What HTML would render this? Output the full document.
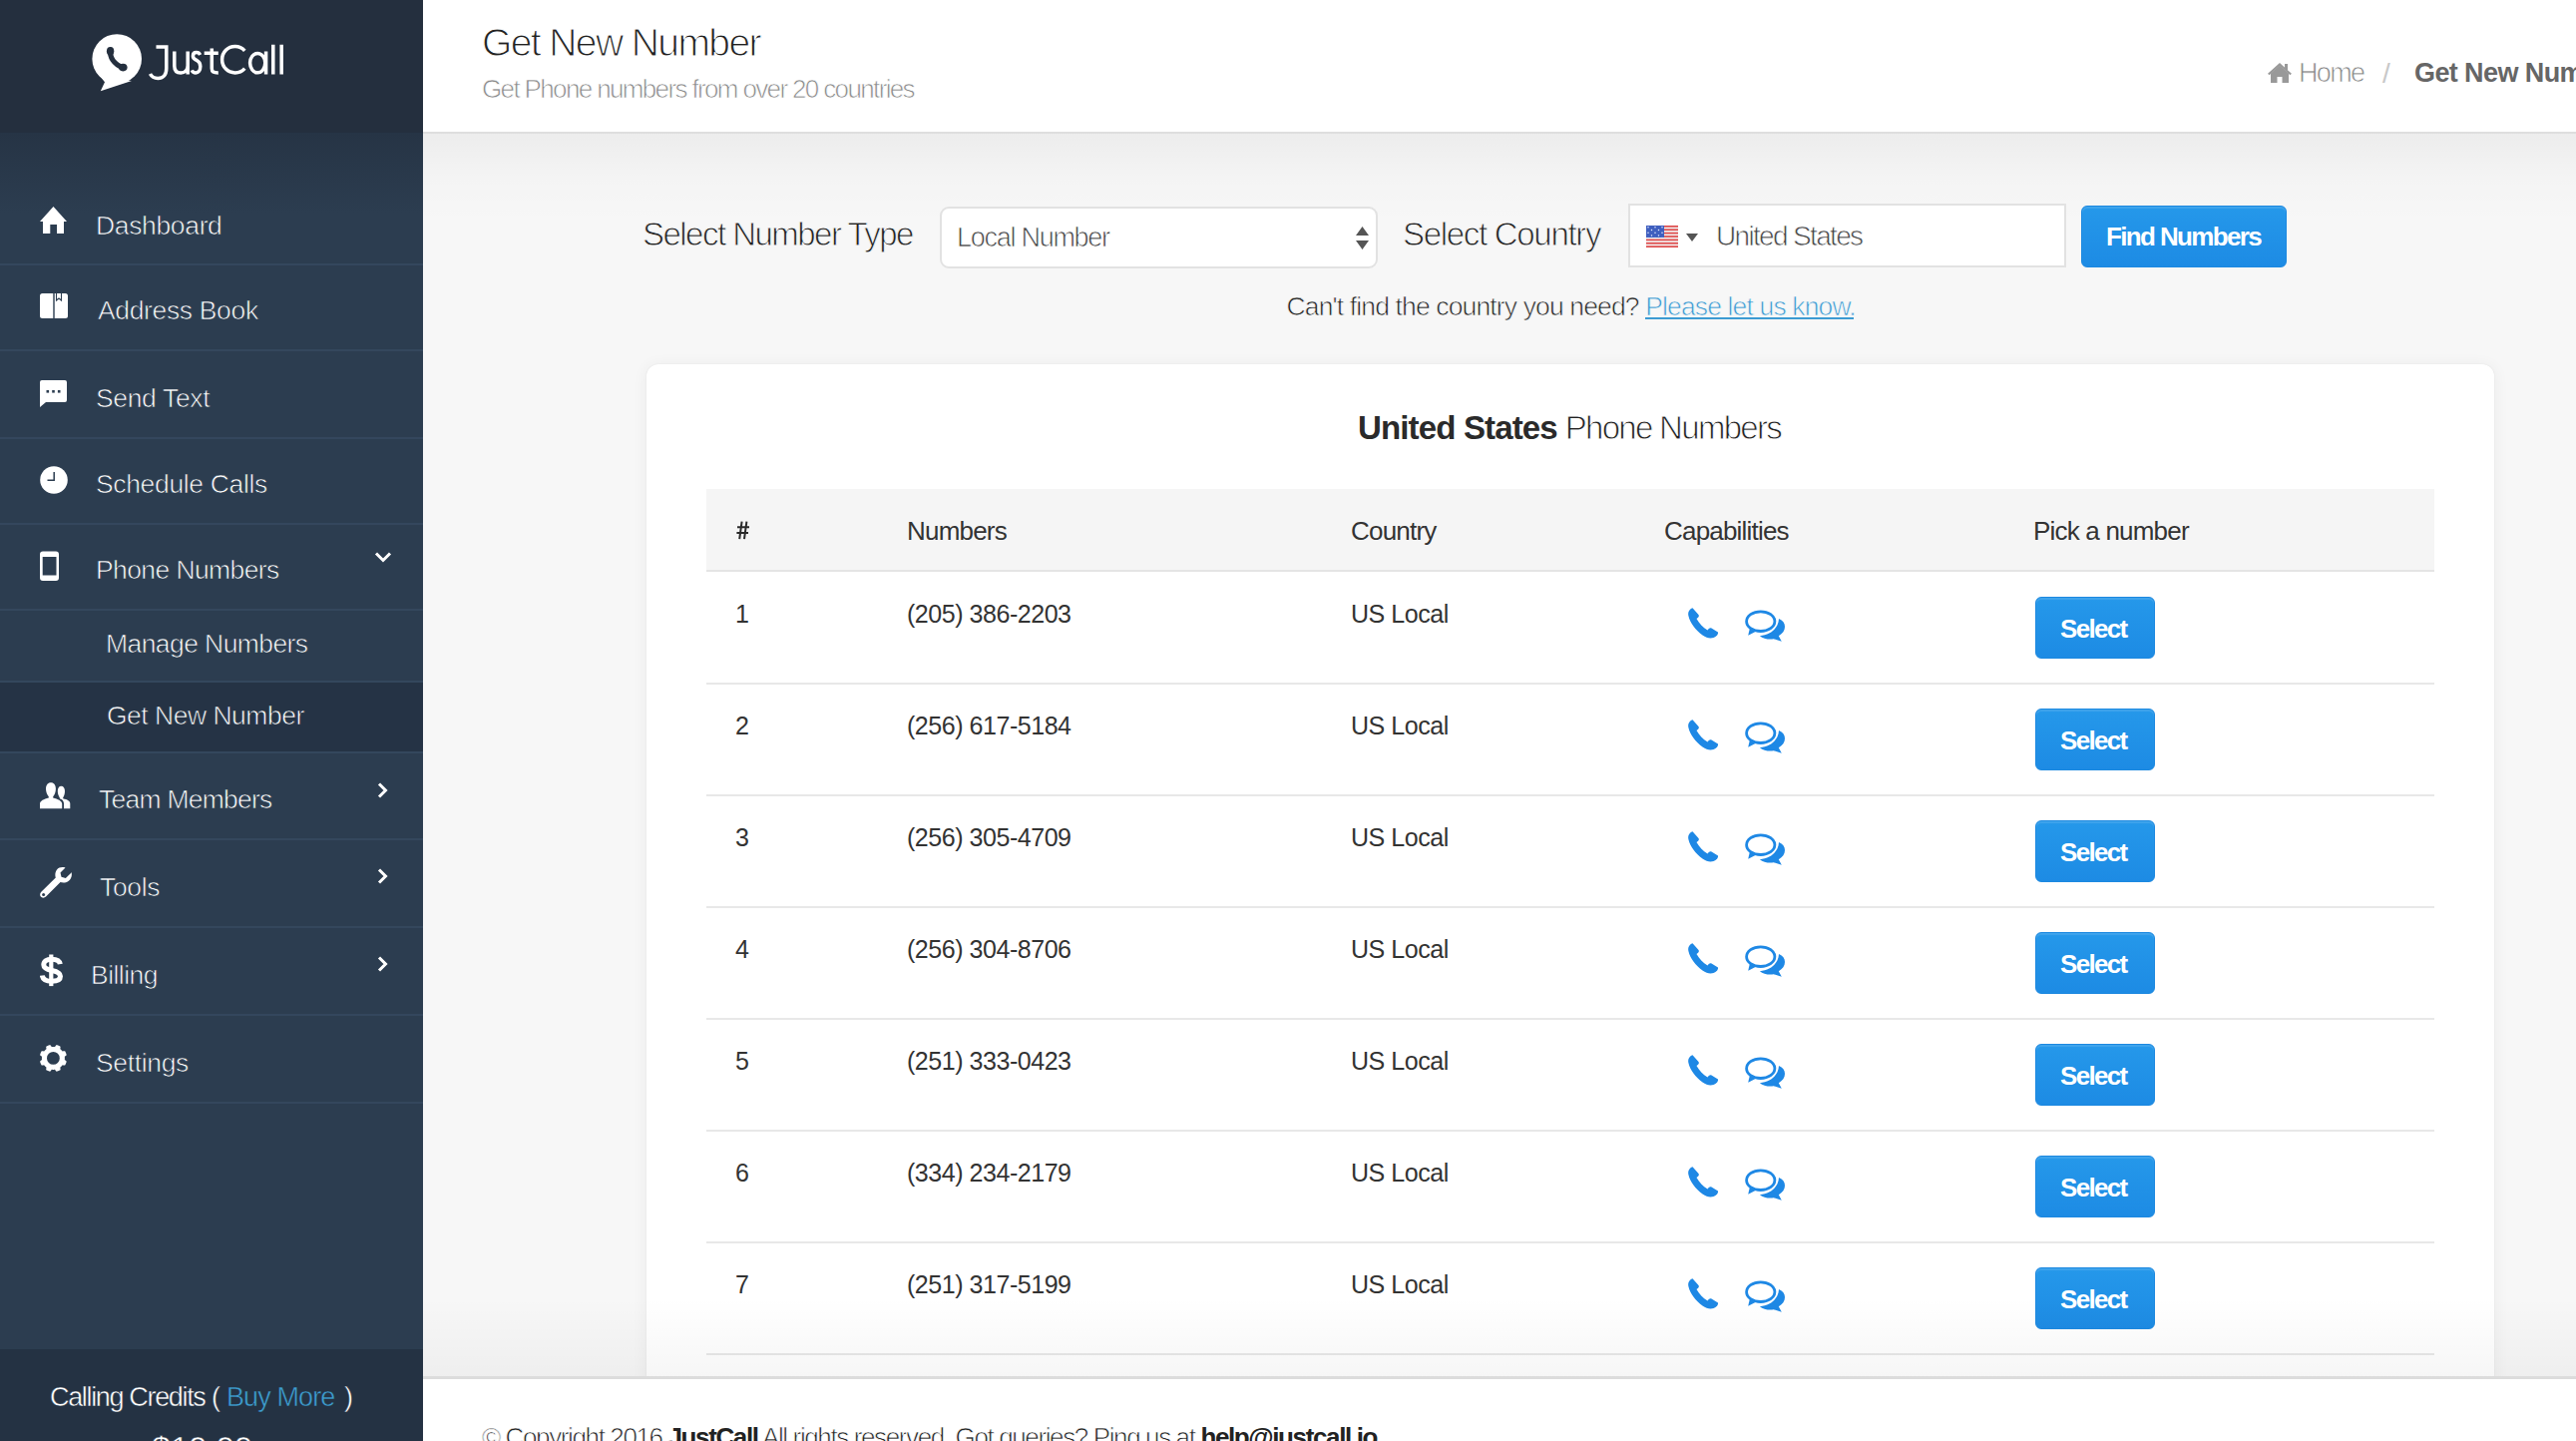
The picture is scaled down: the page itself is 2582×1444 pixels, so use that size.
<!DOCTYPE html>
<html><head><meta charset="utf-8">
<style>
*{box-sizing:border-box}
html,body{margin:0;padding:0}
body{width:2582px;height:1444px;overflow:hidden;position:relative;background:#f7f7f7;font-family:"Liberation Sans",sans-serif;color:#333}
.t{position:absolute;line-height:1;white-space:nowrap;font-family:"Liberation Sans",sans-serif}
.abs{position:absolute}
#sb{position:absolute;left:0;top:0;width:424px;height:1444px;background:#2c3d50;overflow:hidden}
#sbhead{position:absolute;left:0;top:0;width:424px;height:133px;background:#242f3e}
#sbgrad{position:absolute;left:0;top:133px;width:424px;height:80px;background:linear-gradient(#263445,#2c3d50)}
.div{position:absolute;left:0;width:424px;height:2px;background:#34475d}
.mi{color:#fff;font-size:26.5px;letter-spacing:-0.35px;-webkit-text-stroke:0.7px #2c3d50}
.ic{position:absolute}
#main-head{position:absolute;left:424px;top:0;width:2158px;height:134px;background:#fff;border-bottom:2px solid #dedede}
#shade{position:absolute;left:424px;top:134px;width:2158px;height:90px;background:linear-gradient(rgba(0,0,0,0.042),rgba(0,0,0,0.012) 50%,rgba(0,0,0,0))}
#card{position:absolute;left:648px;top:365px;width:1852px;height:1100px;background:#fff;border-radius:12px;box-shadow:0 0 1.5px rgba(0,0,0,0.09),0 2px 14px 3px rgba(0,0,0,0.04)}
#thead{position:absolute;left:708px;top:490px;width:1732px;height:83px;background:#f5f5f5;border-bottom:2px solid #e4e4e4}
.rowdiv{position:absolute;left:708px;width:1732px;height:2px;background:#e8e8e8}
.btn{position:absolute;background:linear-gradient(#2598ea,#1d8be4);border-radius:6px;border:1px solid #1c88e0;box-shadow:inset 0 2px 1px rgba(255,255,255,0.12)}
.hd{top:518.5px;font-size:26px;letter-spacing:-0.8px;color:#333}
.rt{font-size:25px;letter-spacing:-0.46px;color:#333}
.sel{position:absolute;left:2040px;width:120px;height:62px;background:linear-gradient(#2598ea,#1d8be4);border-radius:6px;border:1px solid #1c88e0;box-shadow:inset 0 2px 1px rgba(255,255,255,0.12)}
#footer{position:absolute;left:424px;top:1379px;width:2158px;height:65px;background:#fff;border-top:3px solid #dcdcdc}
#bshade{position:absolute;left:424px;top:1300px;width:2158px;height:79px;background:linear-gradient(rgba(0,0,0,0),rgba(0,0,0,0.035))}
#sbfoot{position:absolute;left:0;top:1352px;width:424px;height:92px;background:#243243}
</style></head>
<body>
<!-- SIDEBAR -->
<div id="sb">
  <div id="sbhead"></div>
  <div id="sbgrad"></div>

  <!-- logo -->
  <svg class="ic" style="left:88px;top:30px" width="60" height="66" viewBox="0 0 60 66">
    <circle cx="29.2" cy="29" r="24.8" fill="#fff"/>
    <path d="M12.8 61.2 L17 52.2 L12 46 L30 50 L44 51 Z" fill="#fff"/>
    <g fill="#242f3e">
      <path d="M22.8 20 C21.8 27 25.5 34 35.5 38" fill="none" stroke="#242f3e" stroke-width="5.2" stroke-linecap="round"/>
      <ellipse cx="22.6" cy="21.3" rx="3.7" ry="4.4"/>
      <ellipse cx="35.3" cy="37.6" rx="4.3" ry="3.8"/>
    </g>
  </svg>
  <svg class="ic" style="left:140px;top:40px" width="150" height="45" viewBox="140 40 150 45">
    <g fill="none" stroke="#fff" stroke-width="3.5">
      <path d="M156.5 47 H166.8 V68.5 C166.8 75.5 163 78.5 158.3 78.5 C154.5 78.5 151.8 76.5 150.5 74"/>
      <path d="M174.8 51.6 V66 C174.8 70.8 177.3 73 181.2 73 C185.1 73 188.2 70.5 188.2 65.5 M188.2 51.6 V74.6"/>
      <path d="M200.6 55 C199.8 53.3 198.5 52.6 196.9 52.6 C194.6 52.6 193.4 54.2 193.4 56.2 C193.4 58.7 195.5 59.6 197.3 60.5 C199.5 61.7 200.8 63.2 200.8 66.6 C200.8 70.4 198.8 73 196.2 73 C194.2 73 193 72 192.3 70.3"/>
      <path d="M212.3 48.5 V68.5 C212.3 72.2 213.8 72.9 218.8 72.9 M204.7 53.3 H218.8"/>
      <path d="M245.3 50.8 C242.8 48 239.3 46.5 235.7 46.5 C228.3 46.5 222.6 52.3 222.6 59.7 C222.6 67.1 228.3 72.9 235.7 72.9 C239.3 72.9 242.8 71.4 245.3 68.6"/>
      <ellipse cx="258.2" cy="63.1" rx="7.6" ry="9.7"/>
      <path d="M266.6 51.6 V74.6 M273.8 44.8 V74.6 M282.2 44.8 V74.6"/>
    </g>
  </svg>

  <div class="div" style="top:264px"></div>
  <div class="div" style="top:350px"></div>
  <div class="div" style="top:438px"></div>
  <div class="div" style="top:524px"></div>
  <div class="div" style="top:610px"></div>
  <div class="div" style="top:682px"></div>
  <div class="abs" style="left:0;top:684px;width:424px;height:69px;background:#253345"></div>
  <div class="div" style="top:753px"></div>
  <div class="div" style="top:840px"></div>
  <div class="div" style="top:928px"></div>
  <div class="div" style="top:1016px"></div>
  <div class="div" style="top:1104px"></div>

  <!-- icons -->
  <svg class="ic" style="left:40px;top:207px" width="27" height="27" viewBox="0 0 27 27">
    <path d="M13.5 0 L0 15 L3 15 L3 27 L10.3 27 L10.3 18 L17 18 L17 27 L24 27 L24 15 L27 15 Z" fill="#fff"/>
  </svg>
  <svg class="ic" style="left:40px;top:294px" width="28" height="27" viewBox="0 0 28 27">
    <rect x="0" y="0" width="28" height="25" rx="2.5" fill="#fff"/>
    <rect x="13.3" y="0" width="1.4" height="26.5" fill="#2c3d50"/>
    <path d="M16.5 0 L16.5 7 L19 5 L21.5 7 L21.5 0" fill="none" stroke="#2c3d50" stroke-width="1.1"/>
  </svg>
  <svg class="ic" style="left:40px;top:381px" width="27" height="28" viewBox="0 0 27 28">
    <path d="M2 0 H25 Q27 0 27 2 V20 Q27 22 25 22 H6 L0 27 V2 Q0 0 2 0 Z" fill="#fff"/>
    <rect x="6.5" y="10" width="2.6" height="2.6" fill="#2c3d50"/>
    <rect x="12.2" y="10" width="2.6" height="2.6" fill="#2c3d50"/>
    <rect x="17.9" y="10" width="2.6" height="2.6" fill="#2c3d50"/>
  </svg>
  <svg class="ic" style="left:40px;top:467px" width="28" height="28" viewBox="0 0 28 28">
    <circle cx="14" cy="14" r="13.8" fill="#fff"/>
    <path d="M14.2 6 V14.2 H7.5" fill="none" stroke="#2c3d50" stroke-width="1.5"/>
  </svg>
  <svg class="ic" style="left:40px;top:552px" width="20" height="31" viewBox="0 0 20 31">
    <path d="M3 0.5 H16 Q19 0.5 19 3.5 V27 Q19 30 16 30 H3 Q0 30 0 27 V3.5 Q0 0.5 3 0.5 Z M2.7 6 V24.5 H16.5 V6 Z" fill="#fff" fill-rule="evenodd"/>
  </svg>
  <svg class="ic" style="left:40px;top:783px" width="31" height="28" viewBox="0 0 31 28">
    <path d="M21.4 4.7 C19.2 4.7 17.8 6.8 17.8 9.8 C17.8 12.5 18.8 14.8 19.8 16.2 L19.8 17.3 C22.5 18.2 23.8 19.8 24 22 V27.3 H30.3 V22.2 C30.3 19.8 27.5 18.3 23.2 17.3 L23.2 16.2 C24.2 14.8 25 12.5 25 9.8 C25 6.8 23.6 4.7 21.4 4.7 Z" fill="#fff"/>
    <path d="M11 1.2 C7.8 1.2 6 3.8 6 7.5 C6 10.8 7.3 13.5 8.8 15.2 L8.8 16.5 C4 17.8 0 19.5 0 22.5 V27.3 H22.2 V22.5 C22.2 19.5 18 17.8 13.2 16.5 L13.2 15.2 C14.7 13.5 15.9 10.8 15.9 7.5 C15.9 3.8 14.2 1.2 11 1.2 Z" fill="#fff" stroke="#2c3d50" stroke-width="2.2" paint-order="stroke"/>
  </svg>
  <svg class="ic" style="left:40px;top:869px" width="33" height="32" viewBox="0 0 33 32">
    <path d="M31.5 5 C32.5 8.5 31.5 12 28.5 14 C26 15.7 23 15.8 20.5 15 L6 29.5 C4.5 31 2 31 0.8 29.5 C-0.3 28 0 26 1.3 24.8 L15.8 10.5 C15 8 15.2 5 17 2.5 C19 0 22.5 -0.5 25.5 0.5 L20.5 5.5 L21.5 9.8 L25.8 11 L31 6 Z" fill="#fff"/>
    <circle cx="3.6" cy="27.4" r="1.5" fill="#2c3d50"/>
  </svg>
  <svg class="ic" style="left:40px;top:956px" width="24" height="33" viewBox="0 0 24 33"><rect x="9.2" y="0.5" width="4.2" height="31.6" fill="#fff"/><path d="M20.3 10.2 C19.8 7 16.5 5.2 11.8 5.2 C6.5 5.2 3.8 7.5 3.8 10.8 C3.8 14.5 7.5 15.6 12 16.5 C16.8 17.5 20.5 18.8 20.5 22.3 C20.5 25.8 17 27.3 11.8 27.3 C6 27.3 2.8 25 2.3 21.5" fill="none" stroke="#fff" stroke-width="5"/></svg>
  <svg class="ic" style="left:39px;top:1046px" width="30" height="30" viewBox="-14.4 -14.4 30 30"><path d="M11.50 0.00 L11.50 0.20 L11.49 0.40 L11.48 0.60 L11.47 0.80 L11.46 1.00 L11.44 1.20 L11.41 1.40 L11.47 1.61 L11.71 1.85 L12.08 2.13 L12.50 2.43 L12.91 2.74 L13.19 3.05 L13.29 3.31 L13.23 3.55 L13.17 3.78 L13.10 4.01 L13.03 4.23 L12.95 4.46 L12.87 4.69 L12.79 4.91 L12.70 5.13 L12.61 5.35 L12.52 5.57 L12.42 5.79 L12.31 6.01 L12.21 6.22 L12.10 6.43 L11.98 6.64 L11.86 6.85 L11.74 7.05 L11.48 7.17 L11.07 7.19 L10.56 7.12 L10.04 7.03 L9.59 6.97 L9.25 6.97 L9.06 7.08 L8.94 7.24 L8.81 7.39 L8.68 7.54 L8.55 7.70 L8.41 7.84 L8.27 7.99 L8.13 8.13 L7.99 8.27 L7.84 8.41 L7.70 8.55 L7.54 8.68 L7.39 8.81 L7.24 8.94 L7.08 9.06 L6.97 9.25 L6.97 9.59 L7.03 10.04 L7.12 10.56 L7.19 11.07 L7.17 11.48 L7.05 11.74 L6.85 11.86 L6.64 11.98 L6.43 12.10 L6.22 12.21 L6.01 12.31 L5.79 12.42 L5.57 12.52 L5.35 12.61 L5.13 12.70 L4.91 12.79 L4.69 12.87 L4.46 12.95 L4.23 13.03 L4.01 13.10 L3.78 13.17 L3.55 13.23 L3.31 13.29 L3.05 13.19 L2.74 12.91 L2.43 12.50 L2.13 12.08 L1.85 11.71 L1.61 11.47 L1.40 11.41 L1.20 11.44 L1.00 11.46 L0.80 11.47 L0.60 11.48 L0.40 11.49 L0.20 11.50 L0.00 11.50 L-0.20 11.50 L-0.40 11.49 L-0.60 11.48 L-0.80 11.47 L-1.00 11.46 L-1.20 11.44 L-1.40 11.41 L-1.61 11.47 L-1.85 11.71 L-2.13 12.08 L-2.43 12.50 L-2.74 12.91 L-3.05 13.19 L-3.31 13.29 L-3.55 13.23 L-3.78 13.17 L-4.01 13.10 L-4.23 13.03 L-4.46 12.95 L-4.69 12.87 L-4.91 12.79 L-5.13 12.70 L-5.35 12.61 L-5.57 12.52 L-5.79 12.42 L-6.01 12.31 L-6.22 12.21 L-6.43 12.10 L-6.64 11.98 L-6.85 11.86 L-7.05 11.74 L-7.17 11.48 L-7.19 11.07 L-7.12 10.56 L-7.03 10.04 L-6.97 9.59 L-6.97 9.25 L-7.08 9.06 L-7.24 8.94 L-7.39 8.81 L-7.54 8.68 L-7.70 8.55 L-7.84 8.41 L-7.99 8.27 L-8.13 8.13 L-8.27 7.99 L-8.41 7.84 L-8.55 7.70 L-8.68 7.54 L-8.81 7.39 L-8.94 7.24 L-9.06 7.08 L-9.25 6.97 L-9.59 6.97 L-10.04 7.03 L-10.56 7.12 L-11.07 7.19 L-11.48 7.17 L-11.74 7.05 L-11.86 6.85 L-11.98 6.64 L-12.10 6.43 L-12.21 6.22 L-12.31 6.01 L-12.42 5.79 L-12.52 5.57 L-12.61 5.35 L-12.70 5.13 L-12.79 4.91 L-12.87 4.69 L-12.95 4.46 L-13.03 4.23 L-13.10 4.01 L-13.17 3.78 L-13.23 3.55 L-13.29 3.31 L-13.19 3.05 L-12.91 2.74 L-12.50 2.43 L-12.08 2.13 L-11.71 1.85 L-11.47 1.61 L-11.41 1.40 L-11.44 1.20 L-11.46 1.00 L-11.47 0.80 L-11.48 0.60 L-11.49 0.40 L-11.50 0.20 L-11.50 0.00 L-11.50 -0.20 L-11.49 -0.40 L-11.48 -0.60 L-11.47 -0.80 L-11.46 -1.00 L-11.44 -1.20 L-11.41 -1.40 L-11.47 -1.61 L-11.71 -1.85 L-12.08 -2.13 L-12.50 -2.43 L-12.91 -2.74 L-13.19 -3.05 L-13.29 -3.31 L-13.23 -3.55 L-13.17 -3.78 L-13.10 -4.01 L-13.03 -4.23 L-12.95 -4.46 L-12.87 -4.69 L-12.79 -4.91 L-12.70 -5.13 L-12.61 -5.35 L-12.52 -5.57 L-12.42 -5.79 L-12.31 -6.01 L-12.21 -6.22 L-12.10 -6.43 L-11.98 -6.64 L-11.86 -6.85 L-11.74 -7.05 L-11.48 -7.17 L-11.07 -7.19 L-10.56 -7.12 L-10.04 -7.03 L-9.59 -6.97 L-9.25 -6.97 L-9.06 -7.08 L-8.94 -7.24 L-8.81 -7.39 L-8.68 -7.54 L-8.55 -7.70 L-8.41 -7.84 L-8.27 -7.99 L-8.13 -8.13 L-7.99 -8.27 L-7.84 -8.41 L-7.70 -8.55 L-7.54 -8.68 L-7.39 -8.81 L-7.24 -8.94 L-7.08 -9.06 L-6.97 -9.25 L-6.97 -9.59 L-7.03 -10.04 L-7.12 -10.56 L-7.19 -11.07 L-7.17 -11.48 L-7.05 -11.74 L-6.85 -11.86 L-6.64 -11.98 L-6.43 -12.10 L-6.22 -12.21 L-6.01 -12.31 L-5.79 -12.42 L-5.57 -12.52 L-5.35 -12.61 L-5.13 -12.70 L-4.91 -12.79 L-4.69 -12.87 L-4.46 -12.95 L-4.23 -13.03 L-4.01 -13.10 L-3.78 -13.17 L-3.55 -13.23 L-3.31 -13.29 L-3.05 -13.19 L-2.74 -12.91 L-2.43 -12.50 L-2.13 -12.08 L-1.85 -11.71 L-1.61 -11.47 L-1.40 -11.41 L-1.20 -11.44 L-1.00 -11.46 L-0.80 -11.47 L-0.60 -11.48 L-0.40 -11.49 L-0.20 -11.50 L-0.00 -11.50 L0.20 -11.50 L0.40 -11.49 L0.60 -11.48 L0.80 -11.47 L1.00 -11.46 L1.20 -11.44 L1.40 -11.41 L1.61 -11.47 L1.85 -11.71 L2.13 -12.08 L2.43 -12.50 L2.74 -12.91 L3.05 -13.19 L3.31 -13.29 L3.55 -13.23 L3.78 -13.17 L4.01 -13.10 L4.23 -13.03 L4.46 -12.95 L4.69 -12.87 L4.91 -12.79 L5.13 -12.70 L5.35 -12.61 L5.57 -12.52 L5.79 -12.42 L6.01 -12.31 L6.22 -12.21 L6.43 -12.10 L6.64 -11.98 L6.85 -11.86 L7.05 -11.74 L7.17 -11.48 L7.19 -11.07 L7.12 -10.56 L7.03 -10.04 L6.97 -9.59 L6.97 -9.25 L7.08 -9.06 L7.24 -8.94 L7.39 -8.81 L7.54 -8.68 L7.70 -8.55 L7.84 -8.41 L7.99 -8.27 L8.13 -8.13 L8.27 -7.99 L8.41 -7.84 L8.55 -7.70 L8.68 -7.54 L8.81 -7.39 L8.94 -7.24 L9.06 -7.08 L9.25 -6.97 L9.59 -6.97 L10.04 -7.03 L10.56 -7.12 L11.07 -7.19 L11.48 -7.17 L11.74 -7.05 L11.86 -6.85 L11.98 -6.64 L12.10 -6.43 L12.21 -6.22 L12.31 -6.01 L12.42 -5.79 L12.52 -5.57 L12.61 -5.35 L12.70 -5.13 L12.79 -4.91 L12.87 -4.69 L12.95 -4.46 L13.03 -4.23 L13.10 -4.01 L13.17 -3.78 L13.23 -3.55 L13.29 -3.31 L13.19 -3.05 L12.91 -2.74 L12.50 -2.43 L12.08 -2.13 L11.71 -1.85 L11.47 -1.61 L11.41 -1.40 L11.44 -1.20 L11.46 -1.00 L11.47 -0.80 L11.48 -0.60 L11.49 -0.40 L11.50 -0.20 Z M6.4 0 A6.4 6.4 0 1 0 -6.4 0 A6.4 6.4 0 1 0 6.4 0 Z" fill="#fff" fill-rule="evenodd"/></svg>
  <!-- chevrons -->
  <svg class="ic" style="left:375px;top:552px" width="18" height="13" viewBox="0 0 18 13"><path d="M2 2.5 L9 9.5 L16 2.5" fill="none" stroke="#fff" stroke-width="3"/></svg>
  <svg class="ic" style="left:377px;top:784px" width="13" height="16" viewBox="0 0 13 16"><path d="M3 1.5 L9.5 8 L3 14.5" fill="none" stroke="#fff" stroke-width="3"/></svg>
  <svg class="ic" style="left:377px;top:870px" width="13" height="16" viewBox="0 0 13 16"><path d="M3 1.5 L9.5 8 L3 14.5" fill="none" stroke="#fff" stroke-width="3"/></svg>
  <svg class="ic" style="left:377px;top:958px" width="13" height="16" viewBox="0 0 13 16"><path d="M3 1.5 L9.5 8 L3 14.5" fill="none" stroke="#fff" stroke-width="3"/></svg>

  <!-- menu text -->
  <div class="t mi" style="left:96px;top:212.6px">Dashboard</div>
  <div class="t mi" style="left:98px;top:298.1px">Address Book</div>
  <div class="t mi" style="left:96px;top:385.9px">Send Text</div>
  <div class="t mi" style="left:96px;top:471.6px">Schedule Calls</div>
  <div class="t mi" style="left:96px;top:558.1px;letter-spacing:-0.6px">Phone Numbers</div>
  <div class="t mi" style="left:106px;top:631.6px;letter-spacing:-0.58px">Manage Numbers</div>
  <div class="t mi" style="left:107px;top:703.6px;letter-spacing:-0.5px;-webkit-text-stroke-color:#253345">Get New Number</div>
  <div class="t mi" style="left:99px;top:788px;letter-spacing:-0.75px">Team Members</div>
  <div class="t mi" style="left:100px;top:875.6px">Tools</div>
  <div class="t mi" style="left:91px;top:964.3px;letter-spacing:-0.55px">Billing</div>
  <div class="t mi" style="left:96px;top:1052.1px">Settings</div>

  <div id="sbfoot"></div>
  <div class="t" style="left:50px;top:1386.7px;font-size:27px;letter-spacing:-1.34px;color:#fff;-webkit-text-stroke:0.45px #243243">Calling Credits</div>
  <div class="t" style="left:212px;top:1386.7px;font-size:27px;color:#fff;-webkit-text-stroke:0.45px #243243">(</div>
  <div class="t" style="left:227px;top:1386.7px;font-size:27px;letter-spacing:-0.9px;color:#3d9dd0;-webkit-text-stroke:0.45px #243243">Buy More</div>
  <div class="t" style="left:345px;top:1386.7px;font-size:27px;color:#fff;-webkit-text-stroke:0.45px #243243">)</div>
  <div class="t" style="left:152px;top:1434px;font-size:34px;letter-spacing:-0.5px;color:#fff;-webkit-text-stroke:0.5px #243243">$10.00</div>

</div>

<!-- HEADER -->
<div id="main-head"></div>
<div class="t" style="left:483px;top:23px;font-size:39px;letter-spacing:-1.6px;color:#222;-webkit-text-stroke:1.1px #fff">Get New Number</div>
<div class="t" style="left:483px;top:76px;font-size:26px;letter-spacing:-1.64px;color:#8a8a8a;-webkit-text-stroke:0.7px #fff">Get Phone numbers from over 20 countries</div>
<svg class="ic" style="left:2273px;top:63px" width="24" height="21" viewBox="0 0 24 21">
  <path d="M12 2.5 L3 10.5 V20 H9.5 V14 H14.5 V20 H21 V10.5 Z" fill="#999"/>
  <path d="M0.8 11.5 L12 1.5 L23.2 11.5" fill="none" stroke="#999" stroke-width="2.2"/>
  <rect x="17" y="1" width="3" height="6" fill="#999"/>
</svg>
<div class="t" style="left:2304px;top:59.6px;font-size:27px;letter-spacing:-1.67px;color:#888;-webkit-text-stroke:0.7px #fff">Home</div>
<div class="t" style="left:2388px;top:59.5px;font-size:28px;color:#c8c8c8">/</div>
<div class="t" style="left:2420px;top:59.6px;font-size:27px;font-weight:700;letter-spacing:-0.6px;color:#666">Get New Number</div>
<div id="shade"></div>

<!-- FORM -->
<div class="t" style="left:644px;top:218px;font-size:33px;letter-spacing:-1.53px;color:#222;-webkit-text-stroke:0.9px #f7f7f7">Select Number Type</div>
<div class="abs" style="left:942px;top:207px;width:439px;height:62px;background:#fff;border:2px solid #e2e2e2;border-radius:9px"></div>
<div class="t" style="left:959px;top:225px;font-size:27px;letter-spacing:-1.27px;color:#444;-webkit-text-stroke:0.7px #fff">Local Number</div>
<svg class="ic" style="left:1358px;top:226px" width="15" height="26" viewBox="0 0 15 26"><path d="M7.5 1 L14 10 H1 Z M1 15 H14 L7.5 24 Z" fill="#555"/></svg>
<div class="t" style="left:1406px;top:218px;font-size:33px;letter-spacing:-1.3px;color:#222;-webkit-text-stroke:0.9px #f7f7f7">Select Country</div>
<div class="abs" style="left:1632px;top:204px;width:439px;height:64px;background:#fff;border:2px solid #e2e2e2"></div>
<svg class="ic" style="left:1650px;top:226px" width="32" height="22" viewBox="0 0 32 22"><rect width="32" height="22" fill="#f2f0f0"/><g fill="#de4b4b"><rect y="0.00" width="32" height="1.69"/><rect y="3.38" width="32" height="1.69"/><rect y="6.77" width="32" height="1.69"/><rect y="10.15" width="32" height="1.69"/><rect y="13.54" width="32" height="1.69"/><rect y="16.92" width="32" height="1.69"/><rect y="20.31" width="32" height="1.69"/></g><rect width="18" height="12" fill="#3f5fbf"/><g fill="#e8ecff"><circle cx="2.0" cy="1.8" r="0.75"/><circle cx="9.0" cy="1.8" r="0.75"/><circle cx="16.0" cy="1.8" r="0.75"/><circle cx="5.5" cy="4.5" r="0.75"/><circle cx="12.5" cy="4.5" r="0.75"/><circle cx="2.0" cy="7.2" r="0.75"/><circle cx="9.0" cy="7.2" r="0.75"/><circle cx="16.0" cy="7.2" r="0.75"/><circle cx="5.5" cy="9.9" r="0.75"/><circle cx="12.5" cy="9.9" r="0.75"/><circle cx="2.0" cy="12.6" r="0.75"/><circle cx="9.0" cy="12.6" r="0.75"/><circle cx="16.0" cy="12.6" r="0.75"/></g></svg>
<svg class="ic" style="left:1689px;top:233px" width="14" height="10" viewBox="0 0 14 10"><path d="M1 1 H13 L7 9 Z" fill="#555"/></svg>
<div class="t" style="left:1720px;top:222.8px;font-size:28px;letter-spacing:-1.67px;color:#444;-webkit-text-stroke:0.7px #fff">United States</div>
<div class="btn" style="left:2086px;top:206px;width:206px;height:62px"></div>
<div class="t" style="left:2111px;top:224px;font-size:26px;font-weight:700;letter-spacing:-1.64px;color:#fff">Find Numbers</div>
<div class="t" style="left:1289.5px;top:293.6px;font-size:26.5px;letter-spacing:-0.86px;color:#222;-webkit-text-stroke:0.7px #f7f7f7">Can't find the country you need? <span style="color:#3c9bd3">Please let us know.</span></div>
<div class="abs" style="left:1649px;top:318px;width:209px;height:2px;background:#3c9bd3"></div>

<!-- CARD -->
<div id="card"></div>
<svg width="0" height="0" style="position:absolute">
<defs>
<g id="phn"><path d="M5.5 1.2 C2 2.5 0.5 5.5 1.5 9.5 C3 16 8.5 23.5 15.5 28.5 C19.5 31.5 23.5 32 26.5 31 C29.5 30 31.5 27.5 31 25.5 L24.5 21.5 C23 20.8 22 21.5 20.5 23.5 C16 21 12 16.5 9.5 12 C11.5 10.5 12.5 9.5 11.5 8 Z" fill="#1e88e5"/></g>
<g id="cht"><ellipse cx="16.75" cy="11.65" rx="14.15" ry="9.85" fill="none" stroke="#1e88e5" stroke-width="2.8"/>
<path d="M6 18 L4.2 25.7 L13 21.3 Z" fill="#1e88e5"/>
<path d="M35 9 C39 10.5 41 13.5 41 17 C41 20.8 38.8 24 34.8 26.2 L37.8 31.8 L29.8 29.3 C28.5 29.5 27.5 29.6 26.5 29.6 C22.5 29.6 18.5 28.3 15.9 26.2 C26.5 25.5 34.5 18.5 35 9 Z" fill="#1e88e5"/></g>
</defs></svg>
<div id="thead"></div>
<div class="t" style="left:1361px;top:411.7px;font-size:33px;letter-spacing:-1.29px;color:#222;-webkit-text-stroke:0.9px #fff"><b style="-webkit-text-stroke:0;letter-spacing:-0.85px;color:#2a2a2a">United States</b> <span style="letter-spacing:-1.7px">Phone Numbers</span></div>
<svg class="ic" style="left:738px;top:522px" width="14" height="19" viewBox="0 0 14 19"><g stroke="#2a2a2a" stroke-width="2" fill="none"><path d="M5.6 0.6 L3.2 18.2 M10.4 0.6 L8 18.2 M1 6.3 H13 M0.4 11.9 H12"/></g></svg>
<div class="t hd" style="left:909px">Numbers</div>
<div class="t hd" style="left:1354px">Country</div>
<div class="t hd" style="left:1668px">Capabilities</div>
<div class="t hd" style="left:2038px">Pick a number</div>
<div class="t rt" style="left:737px;top:602.8px">1</div>
<div class="t rt" style="left:909px;top:602.8px">(205) 386-2203</div>
<div class="t rt" style="left:1354px;top:602.8px">US Local</div>
<svg class="ic" style="left:1691px;top:608px" width="33" height="33" viewBox="0 0 33 33"><use href="#phn"/></svg>
<svg class="ic" style="left:1748px;top:611px" width="42" height="33" viewBox="0 0 42 33"><use href="#cht"/></svg>
<div class="sel" style="top:598px"></div>
<div class="t" style="left:2065px;top:616.7px;font-size:26px;font-weight:700;letter-spacing:-1.7px;color:#fff">Select</div>
<div class="rowdiv" style="top:684px"></div>
<div class="t rt" style="left:737px;top:714.8px">2</div>
<div class="t rt" style="left:909px;top:714.8px">(256) 617-5184</div>
<div class="t rt" style="left:1354px;top:714.8px">US Local</div>
<svg class="ic" style="left:1691px;top:720px" width="33" height="33" viewBox="0 0 33 33"><use href="#phn"/></svg>
<svg class="ic" style="left:1748px;top:723px" width="42" height="33" viewBox="0 0 42 33"><use href="#cht"/></svg>
<div class="sel" style="top:710px"></div>
<div class="t" style="left:2065px;top:728.7px;font-size:26px;font-weight:700;letter-spacing:-1.7px;color:#fff">Select</div>
<div class="rowdiv" style="top:796px"></div>
<div class="t rt" style="left:737px;top:826.8px">3</div>
<div class="t rt" style="left:909px;top:826.8px">(256) 305-4709</div>
<div class="t rt" style="left:1354px;top:826.8px">US Local</div>
<svg class="ic" style="left:1691px;top:832px" width="33" height="33" viewBox="0 0 33 33"><use href="#phn"/></svg>
<svg class="ic" style="left:1748px;top:835px" width="42" height="33" viewBox="0 0 42 33"><use href="#cht"/></svg>
<div class="sel" style="top:822px"></div>
<div class="t" style="left:2065px;top:840.7px;font-size:26px;font-weight:700;letter-spacing:-1.7px;color:#fff">Select</div>
<div class="rowdiv" style="top:908px"></div>
<div class="t rt" style="left:737px;top:938.8px">4</div>
<div class="t rt" style="left:909px;top:938.8px">(256) 304-8706</div>
<div class="t rt" style="left:1354px;top:938.8px">US Local</div>
<svg class="ic" style="left:1691px;top:944px" width="33" height="33" viewBox="0 0 33 33"><use href="#phn"/></svg>
<svg class="ic" style="left:1748px;top:947px" width="42" height="33" viewBox="0 0 42 33"><use href="#cht"/></svg>
<div class="sel" style="top:934px"></div>
<div class="t" style="left:2065px;top:952.7px;font-size:26px;font-weight:700;letter-spacing:-1.7px;color:#fff">Select</div>
<div class="rowdiv" style="top:1020px"></div>
<div class="t rt" style="left:737px;top:1050.8px">5</div>
<div class="t rt" style="left:909px;top:1050.8px">(251) 333-0423</div>
<div class="t rt" style="left:1354px;top:1050.8px">US Local</div>
<svg class="ic" style="left:1691px;top:1056px" width="33" height="33" viewBox="0 0 33 33"><use href="#phn"/></svg>
<svg class="ic" style="left:1748px;top:1059px" width="42" height="33" viewBox="0 0 42 33"><use href="#cht"/></svg>
<div class="sel" style="top:1046px"></div>
<div class="t" style="left:2065px;top:1064.7px;font-size:26px;font-weight:700;letter-spacing:-1.7px;color:#fff">Select</div>
<div class="rowdiv" style="top:1132px"></div>
<div class="t rt" style="left:737px;top:1162.8px">6</div>
<div class="t rt" style="left:909px;top:1162.8px">(334) 234-2179</div>
<div class="t rt" style="left:1354px;top:1162.8px">US Local</div>
<svg class="ic" style="left:1691px;top:1168px" width="33" height="33" viewBox="0 0 33 33"><use href="#phn"/></svg>
<svg class="ic" style="left:1748px;top:1171px" width="42" height="33" viewBox="0 0 42 33"><use href="#cht"/></svg>
<div class="sel" style="top:1158px"></div>
<div class="t" style="left:2065px;top:1176.7px;font-size:26px;font-weight:700;letter-spacing:-1.7px;color:#fff">Select</div>
<div class="rowdiv" style="top:1244px"></div>
<div class="t rt" style="left:737px;top:1274.8px">7</div>
<div class="t rt" style="left:909px;top:1274.8px">(251) 317-5199</div>
<div class="t rt" style="left:1354px;top:1274.8px">US Local</div>
<svg class="ic" style="left:1691px;top:1280px" width="33" height="33" viewBox="0 0 33 33"><use href="#phn"/></svg>
<svg class="ic" style="left:1748px;top:1283px" width="42" height="33" viewBox="0 0 42 33"><use href="#cht"/></svg>
<div class="sel" style="top:1270px"></div>
<div class="t" style="left:2065px;top:1288.7px;font-size:26px;font-weight:700;letter-spacing:-1.7px;color:#fff">Select</div>
<div class="rowdiv" style="top:1356px"></div>
<div id="bshade"></div>

<!-- FOOTER -->
<div id="footer"></div>
<div class="t" style="left:483px;top:1427px;font-size:26px;letter-spacing:-1.38px;color:#222;-webkit-text-stroke:0.7px #fff">© Copyright 2016 <b style="-webkit-text-stroke:0">JustCall</b> All rights reserved. Got queries? Ping us at <b style="-webkit-text-stroke:0">help@justcall.io</b></div>
</body></html>
